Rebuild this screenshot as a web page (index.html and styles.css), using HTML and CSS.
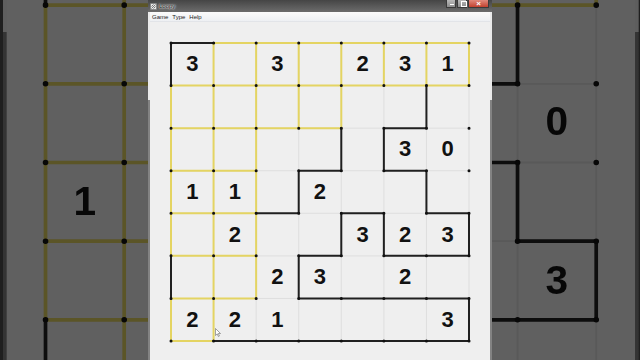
FILE: index.html
```html
<!DOCTYPE html>
<html lang="en">
<head>
<meta charset="utf-8">
<title>Loopy</title>
<link rel="stylesheet" href="styles.css">
</head>
<body>
<div class="stage">
  <div class="backdrop" aria-hidden="true">
    <div class="window">
      <div class="titlebar">
        <svg class="app-icon" viewBox="0 0 7 7"><rect x="0.5" y="0.5" width="6" height="6" fill="#e8e8e8" stroke="#777" stroke-width="0.6"/><path d="M1.5 5.5L5.5 1.5M1.5 3.5L3.5 1.5M3.5 5.5L5.5 3.5" stroke="#444" stroke-width="0.7"/></svg>
        <span class="title"></span>
        <div class="caption-buttons"><span class="cb min"></span><span class="cb max"></span><span class="cb close"></span></div>
      </div>
      <nav class="menubar"></nav>
      <div class="client">
        <div class="board">
          <svg class="lines" viewBox="-0.047 -0.047 7.094 7.094">
            <path class="grid" d="M0 0H7M0 1H7M0 2H7M0 3H7M0 4H7M0 5H7M0 6H7M0 7H7M0 0V7M1 0V7M2 0V7M3 0V7M4 0V7M5 0V7M6 0V7M7 0V7"/>
            <path class="yes-yellow" d="M1 0H7M0 1H7M0 2H4M0 3H2M0 4H2M0 5H2M0 6H2M0 7H1M0 1V5M0 6V7M1 0V7M2 0V6M3 0V2M4 0V2M5 0V1M6 0V1M7 0V1"/>
            <path class="yes-black" d="M1 0H0V1M6 1V2H5V3M5 3H6V4H7V5H5V4H4V5H3V6H7V7H1M4 2V3H3V4H2M0 5V6"/>
            <path class="dots" d="M0 0h.001M1 0h.001M2 0h.001M3 0h.001M4 0h.001M5 0h.001M6 0h.001M7 0h.001M0 1h.001M1 1h.001M2 1h.001M3 1h.001M4 1h.001M5 1h.001M6 1h.001M7 1h.001M0 2h.001M1 2h.001M2 2h.001M3 2h.001M4 2h.001M5 2h.001M6 2h.001M7 2h.001M0 3h.001M1 3h.001M2 3h.001M3 3h.001M4 3h.001M5 3h.001M6 3h.001M7 3h.001M0 4h.001M1 4h.001M2 4h.001M3 4h.001M4 4h.001M5 4h.001M6 4h.001M7 4h.001M0 5h.001M1 5h.001M2 5h.001M3 5h.001M4 5h.001M5 5h.001M6 5h.001M7 5h.001M0 6h.001M1 6h.001M2 6h.001M3 6h.001M4 6h.001M5 6h.001M6 6h.001M7 6h.001M0 7h.001M1 7h.001M2 7h.001M3 7h.001M4 7h.001M5 7h.001M6 7h.001M7 7h.001"/>
          </svg>
          <!-- only the clues that show beside the real window are repeated in the enlarged copy -->
          <div class="cell"></div><div class="cell"></div><div class="cell"></div><div class="cell"></div><div class="cell"></div><div class="cell"></div><div class="cell"></div>
          <div class="cell"></div><div class="cell"></div><div class="cell"></div><div class="cell"></div><div class="cell"></div><div class="cell"></div><div class="cell"></div>
          <div class="cell"></div><div class="cell"></div><div class="cell"></div><div class="cell"></div><div class="cell"></div><div class="cell"></div><div class="cell">0</div>
          <div class="cell">1</div><div class="cell"></div><div class="cell"></div><div class="cell"></div><div class="cell"></div><div class="cell"></div><div class="cell"></div>
          <div class="cell"></div><div class="cell"></div><div class="cell"></div><div class="cell"></div><div class="cell"></div><div class="cell"></div><div class="cell">3</div>
          <div class="cell"></div><div class="cell"></div><div class="cell"></div><div class="cell"></div><div class="cell"></div><div class="cell"></div><div class="cell"></div>
          <div class="cell"></div><div class="cell"></div><div class="cell"></div><div class="cell"></div><div class="cell"></div><div class="cell"></div><div class="cell"></div>
        </div>
      </div>
    </div>
  </div>

  <div class="window">
    <div class="titlebar">
      <svg class="app-icon" viewBox="0 0 7 7"><rect x="0.5" y="0.5" width="6" height="6" fill="#e8e8e8" stroke="#777" stroke-width="0.6"/><path d="M1.5 5.5L5.5 1.5M1.5 3.5L3.5 1.5M3.5 5.5L5.5 3.5" stroke="#444" stroke-width="0.7"/></svg>
      <span class="title">Loopy</span>
      <div class="caption-buttons"><span class="cb min"></span><span class="cb max"></span><span class="cb close"></span></div>
    </div>
    <nav class="menubar"><span>Game</span><span>Type</span><span>Help</span></nav>
    <div class="client">
      <div class="board">
        <svg class="lines" viewBox="-0.047 -0.047 7.094 7.094">
          <path class="grid" d="M0 0H7M0 1H7M0 2H7M0 3H7M0 4H7M0 5H7M0 6H7M0 7H7M0 0V7M1 0V7M2 0V7M3 0V7M4 0V7M5 0V7M6 0V7M7 0V7"/>
          <path class="yes-yellow" d="M1 0H7M0 1H7M0 2H4M0 3H2M0 4H2M0 5H2M0 6H2M0 7H1M0 1V5M0 6V7M1 0V7M2 0V6M3 0V2M4 0V2M5 0V1M6 0V1M7 0V1"/>
          <path class="yes-black" d="M1 0H0V1M6 1V2H5V3M5 3H6V4H7V5H5V4H4V5H3V6H7V7H1M4 2V3H3V4H2M0 5V6"/>
          <path class="dots" d="M0 0h.001M1 0h.001M2 0h.001M3 0h.001M4 0h.001M5 0h.001M6 0h.001M7 0h.001M0 1h.001M1 1h.001M2 1h.001M3 1h.001M4 1h.001M5 1h.001M6 1h.001M7 1h.001M0 2h.001M1 2h.001M2 2h.001M3 2h.001M4 2h.001M5 2h.001M6 2h.001M7 2h.001M0 3h.001M1 3h.001M2 3h.001M3 3h.001M4 3h.001M5 3h.001M6 3h.001M7 3h.001M0 4h.001M1 4h.001M2 4h.001M3 4h.001M4 4h.001M5 4h.001M6 4h.001M7 4h.001M0 5h.001M1 5h.001M2 5h.001M3 5h.001M4 5h.001M5 5h.001M6 5h.001M7 5h.001M0 6h.001M1 6h.001M2 6h.001M3 6h.001M4 6h.001M5 6h.001M6 6h.001M7 6h.001M0 7h.001M1 7h.001M2 7h.001M3 7h.001M4 7h.001M5 7h.001M6 7h.001M7 7h.001"/>
        </svg>
        <div class="cell">3</div><div class="cell"></div><div class="cell">3</div><div class="cell"></div><div class="cell">2</div><div class="cell">3</div><div class="cell">1</div>
        <div class="cell"></div><div class="cell"></div><div class="cell"></div><div class="cell"></div><div class="cell"></div><div class="cell"></div><div class="cell"></div>
        <div class="cell"></div><div class="cell"></div><div class="cell"></div><div class="cell"></div><div class="cell"></div><div class="cell">3</div><div class="cell">0</div>
        <div class="cell">1</div><div class="cell">1</div><div class="cell"></div><div class="cell">2</div><div class="cell"></div><div class="cell"></div><div class="cell"></div>
        <div class="cell"></div><div class="cell">2</div><div class="cell"></div><div class="cell"></div><div class="cell">3</div><div class="cell">2</div><div class="cell">3</div>
        <div class="cell"></div><div class="cell"></div><div class="cell">2</div><div class="cell">3</div><div class="cell"></div><div class="cell">2</div><div class="cell"></div>
        <div class="cell">2</div><div class="cell">2</div><div class="cell">1</div><div class="cell"></div><div class="cell"></div><div class="cell"></div><div class="cell">3</div>
      </div>
    </div>
  </div>

  <svg class="cursor" viewBox="0 0 6 9"><path d="M0.5 0.5V7.5L2.2 5.9L3.4 8.5L4.4 8L3.3 5.5H5.5Z" fill="#fff" stroke="#666" stroke-width="0.6"/></svg>
</div>
</body>
</html>
```
FILE: styles.css
```css
* { box-sizing: border-box; }

body {
  margin: 0;
  background: #1f1f1f;
}

.stage {
  position: relative;
  width: 640px;
  height: 360px;
  overflow: hidden;
  background: #1f1f1f;
  font-family: "Liberation Sans", Arial, sans-serif;
}

/* enlarged, dimmed copy of the window behind the real one */
.backdrop {
  position: absolute;
  left: 2.5px;
  top: -153px;
  transform: scale(1.848);
  transform-origin: 0 0;
  filter: brightness(0.4) blur(0.35px);
}

.window {
  width: 344px;
  display: flex;
  flex-direction: column;
  background: linear-gradient(#eaeaea 0 100px, #838383 100px);
}

.stage > .window {
  position: relative;
  margin-left: 148px;
}

.titlebar {
  height: 12px;
  display: flex;
  align-items: center;
  gap: 2px;
  padding-left: 2px;
  background: linear-gradient(#454545, #6c6c6c);
}

.app-icon {
  width: 7px;
  height: 7px;
  flex: none;
}

.title {
  font-size: 6px;
  color: #111;
  text-shadow: 0 0 1px #fff, 0 0 2px #fff, 0 0 3px rgba(255, 255, 255, 0.8);
  line-height: 1;
}

.caption-buttons {
  margin-left: auto;
  margin-right: 3px;
  align-self: flex-start;
  display: flex;
  gap: 1px;
}

.cb {
  display: block;
  height: 8px;
  border: 1px solid #3a3a3a;
  border-top: none;
  position: relative;
}

.cb.min, .cb.max {
  width: 10px;
  background: linear-gradient(#b9b9b9, #8c8c8c);
}

.cb.min::after {
  content: "";
  position: absolute;
  left: 3px;
  top: 4px;
  width: 4px;
  height: 1px;
  background: #fff;
}

.cb.max::after {
  content: "";
  position: absolute;
  left: 3px;
  top: 1px;
  width: 4px;
  height: 4px;
  border: 1px solid #fff;
}

.cb.close {
  width: 21px;
  background: linear-gradient(#e08a7c, #c2412f);
}

.cb.close::after {
  content: "\00D7";
  position: absolute;
  inset: 0;
  text-align: center;
  font: bold 8px/7px "Liberation Sans", Arial, sans-serif;
  color: #fff;
}

.menubar {
  height: 10px;
  margin: 0 2px;
  display: flex;
  align-items: center;
  background: linear-gradient(#fbfbfb, #eef0f3);
  border-bottom: 1px solid #e2e4e8;
  font-size: 6px;
  color: #222;
}

.menubar span {
  padding: 0 2px;
}

.client {
  margin: 0 2px;
  padding: 21px 21px 40px;
  background: #efefef;
}

.board {
  position: relative;
  width: 298px;
  height: 298px;
  display: grid;
  grid-template-columns: repeat(7, 1fr);
  grid-template-rows: repeat(7, 1fr);
}

.lines {
  position: absolute;
  left: -2px;
  top: -2px;
  width: 302px;
  height: 302px;
  overflow: visible;
}

.lines path {
  fill: none;
  vector-effect: non-scaling-stroke;
  stroke-linecap: square;
  stroke-linejoin: miter;
}

.lines .grid {
  stroke: #dedede;
  stroke-width: 1px;
  stroke-linecap: butt;
}

.lines .yes-yellow {
  stroke: #e4d462;
  stroke-width: 2px;
}

.lines .yes-black {
  stroke: #202020;
  stroke-width: 2px;
}

.lines .dots {
  stroke: #111;
  stroke-width: 3px;
  stroke-linecap: round;
}

.cell {
  position: relative;
  display: flex;
  align-items: center;
  justify-content: center;
  font-size: 22px;
  font-weight: bold;
  color: #111;
}

.cursor {
  position: absolute;
  left: 215px;
  top: 328px;
  width: 6px;
  height: 9px;
}
```
